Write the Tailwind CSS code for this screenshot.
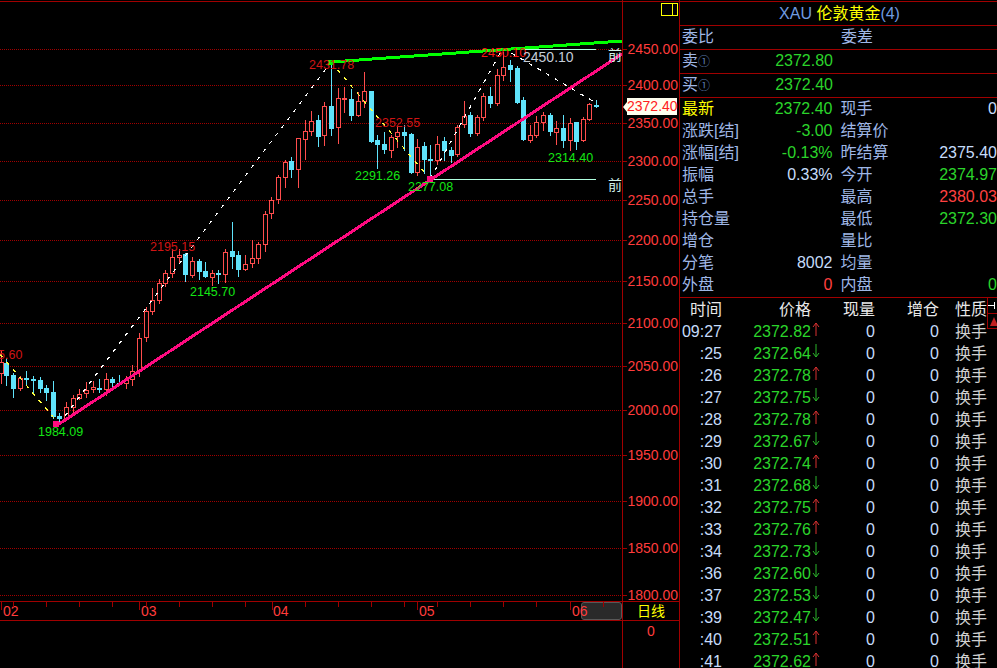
<!DOCTYPE html>
<html lang="en">
<head>
  <meta charset="UTF-8">
  <title>XAU 伦敦黄金</title>
  <script src="https://cdn.jsdelivr.net/npm/@tailwindcss/browser@4"></script>
</head>
<body class="bg-black overflow-hidden font-['Liberation_Sans','Noto_Sans_CJK_SC',sans-serif]">

  <div class="flex w-[997px] h-[668px] overflow-hidden bg-black">

    <!-- Chart + price axis -->
    <div class="flex flex-col w-[679px] shrink-0">
      <div class="flex h-[601px]">
        <svg id="chart" width="622" height="601" class="block shrink-0 text-[12.5px]"></svg>
        <div class="relative w-[57px] border-l border-[#a00000]">
          <svg id="axis" width="56" height="601" class="block text-[14px]"></svg>
          <!-- yellow box, top right -->
          <div class="absolute left-[38px] top-[3px] w-[17px] h-[13px] border border-[#ffff00] flex justify-end">
            <div class="w-[5px] h-full border-l border-[#ffff00]"></div>
          </div>
          <!-- last price tag -->
          <div class="absolute left-[4px] top-[98px] w-[50px] h-[17px] bg-[#fffff0] text-[#ff2020] text-[14px] leading-[17px] text-right pr-px">2372.40</div>
          <div class="absolute left-0 top-[102px] w-0 h-0 border-y-[5px] border-y-transparent border-r-[4px] border-r-[#fffff0]"></div>
        </div>
      </div>

      <!-- Date axis -->
      <div class="flex h-[18px] border-y border-[#a00000] box-content">
        <div id="dates" class="relative w-[622px] h-[18px] text-[#ff3c3c] text-[14px] leading-[18px] overflow-hidden">
          <!-- scroll handle -->
          <div class="absolute left-[581px] top-0 w-[41px] h-[18px] rounded-[3px] bg-[#2a2a2a] border border-[#585858]"></div>
          <span class="absolute left-[3px] top-0">02</span>
          <span class="absolute left-[141px] top-0">03</span>
          <span class="absolute left-[273px] top-0">04</span>
          <span class="absolute left-[419px] top-0">05</span>
          <span class="absolute left-[572px] top-0">06</span>
        </div>
        <div class="w-[57px] border-l border-[#a00000] text-center text-[#ffff00] text-[14px] leading-[18px]">日线</div>
      </div>

      <div class="flex flex-1">
        <div class="w-[622px]"></div>
        <div class="w-[57px] border-l border-[#a00000] text-center text-[#ff3c3c] text-[14px] leading-[20px]">0</div>
      </div>
    </div>

    <!-- Quote panel -->
    <div class="w-[318px] shrink-0 border-l border-[#a00000] overflow-hidden text-[16px] text-[#9fb7e6]">
      <div class="mt-px border-t border-b border-[#a00000] box-content h-[23px] flex items-center justify-center pl-[2px] leading-none">
        <span class="text-[#6f9be0]">XAU&nbsp;</span><span class="text-[#ffff00]">伦敦黄金</span><span class="text-[#6f9be0]">(4)</span>
      </div>

      <div class="flex h-[24px] items-center border-b border-[#a00000] pl-[2px] pb-[2px]">
        <span class="w-[159px]">委比</span><span>委差</span>
      </div>
      <div class="flex h-[24px] items-center border-b border-[#a00000] pl-[2px] pb-[2px]">
        <div class="w-[151px] flex justify-between"><span>卖<span class="text-[12px] text-[#5a78aa]">①</span></span><span class="text-[#2bd42b]">2372.80</span></div>
      </div>
      <div class="flex h-[24px] items-center border-b border-[#a00000] pl-[2px] pb-[2px]">
        <div class="w-[151px] flex justify-between"><span>买<span class="text-[12px] text-[#5a78aa]">①</span></span><span class="text-[#2bd42b]">2372.40</span></div>
      </div>

      <div id="stats" class="border-b border-[#a00000] h-[200px] box-border"></div>

      <!-- Tick table -->
      <div class="relative pt-px">
        <div class="flex h-[22px] items-center text-[#e8e8e8]">
          <span class="w-[42px] text-right">时间</span>
          <span class="w-[89px] text-right">价格</span>
          <span class="w-[64px] text-right">现量</span>
          <span class="w-[64px] text-right">增仓</span>
          <span class="w-[48px] text-right">性质</span>
        </div>
        <div id="ticks"></div>
        <!-- side marker -->
        <div class="absolute left-[307px] top-0 w-[11px] h-[31px] bg-black border-l border-b border-[#a00000]">
          <div class="h-[16px] border-b border-[#a00000] flex items-center">
            <div class="w-[6px] h-px bg-white"></div><div class="w-px h-[7px] bg-white"></div>
          </div>
          <div class="mt-[3px] ml-[2px] w-0 h-0 border-x-[4px] border-x-transparent border-b-[9px] border-b-[#c02020]"></div>
        </div>
      </div>
    </div>
  </div>

  <script>
    const NS = 'http://www.w3.org/2000/svg';
    const chart = document.getElementById('chart');
    const axis = document.getElementById('axis');

    const RED = '#ff4d4d';
    const CYAN = '#5fe3fb';
    const GRID = '#a00000';

    const add = (parent, tag, attrs, text) => {
      const el = document.createElementNS(NS, tag);
      Object.keys(attrs).forEach(k => el.setAttribute(k, attrs[k]));
      if (text) el.textContent = text;
      parent.appendChild(el);
      return el;
    };

    // top rule
    add(chart, 'rect', { x: 0, y: 1, width: 622, height: 1, fill: GRID });
    add(axis, 'rect', { x: 0, y: 1, width: 56, height: 1, fill: GRID });

    // price, y of the grid line
    const levels = [
      [2450, 49], [2400, 85], [2350, 123], [2300, 161], [2250, 200], [2200, 240], [2150, 281],
      [2100, 323], [2050, 366], [2000, 410], [1950, 455], [1900, 501], [1850, 548], [1800, 595]
    ];

    levels.forEach(([price, y]) => {
      add(chart, 'line', { x1: 0, x2: 622, y1: y + 0.5, y2: y + 0.5, stroke: GRID, 'stroke-dasharray': '1 1', 'shape-rendering': 'crispEdges' });
      add(axis, 'rect', { x: 0, y: y, width: 4, height: 1, fill: GRID });
      add(axis, 'text', { x: 55, y: y + 5, 'text-anchor': 'end', fill: '#ff3c3c' }, price.toFixed(2));
    });

    // x, body top, body bottom, wick top, wick bottom, colour
    const candles = [
      [1,362,373,350,383,'r'],[6,363,375,358,385,'c'],[13,375,388,373,397,'c'],[20,378,388,376,390,'r'],
      [26,378,379,371,384,'c'],[33,379,380,376,392,'c'],[40,380,388,377,392,'c'],[46,388,392,385,400,'c'],
      [53,392,416,381,418,'c'],[59,416,418,413,422,'c'],[66,407,418,402,420,'r'],[73,398,407,395,414,'r'],
      [79,394,398,389,399,'r'],[86,390,393,382,397,'r'],[93,387,389,381,392,'r'],[99,388,389,379,392,'c'],
      [106,379,389,373,395,'r'],[112,379,382,377,388,'c'],[119,383,384,375,385,'c'],[126,379,383,376,388,'r'],
      [132,371,379,365,385,'r'],[139,338,371,333,376,'r'],[146,311,337,307,341,'r'],[152,300,311,288,314,'r'],
      [159,283,300,279,303,'r'],[165,273,283,270,286,'r'],[172,257,273,249,277,'r'],[179,255,257,249,263,'r'],
      [185,254,274,253,281,'c'],[192,261,275,257,277,'r'],[199,261,271,259,279,'c'],[205,271,276,262,277,'c'],
      [212,273,277,270,285,'r'],[218,273,274,270,283,'c'],[225,252,274,249,282,'r'],[232,251,256,222,268,'c'],
      [238,255,269,251,276,'c'],[245,264,269,255,270,'r'],[252,258,263,240,267,'r'],[258,244,258,242,263,'r'],
      [265,214,244,211,251,'r'],[271,200,213,197,218,'r'],[278,177,199,175,203,'r'],[285,162,177,160,187,'r'],
      [291,161,169,157,177,'c'],[298,138,169,138,187,'r'],[305,131,139,120,159,'r'],[311,121,131,111,135,'r'],
      [318,120,136,115,146,'c'],[324,106,135,102,145,'r'],[331,106,128,60,135,'c'],[338,98,127,88,143,'r'],
      [344,98,99,87,112,'r'],[351,99,115,89,120,'c'],[358,101,115,92,116,'r'],[364,91,101,72,107,'r'],
      [371,91,141,91,142,'c'],[377,140,144,135,168,'c'],[384,144,149,132,153,'c'],[391,137,150,135,157,'r'],
      [397,132,136,126,147,'r'],[404,132,135,125,150,'c'],[411,134,172,133,173,'c'],[417,147,172,139,175,'r'],
      [424,146,159,142,173,'c'],[430,159,160,145,176,'c'],[437,144,160,136,164,'r'],[444,141,150,137,160,'c'],
      [451,150,155,147,162,'c'],[457,127,154,125,156,'r'],[464,116,124,101,127,'r'],[470,115,133,112,136,'c'],
      [477,117,133,115,135,'r'],[483,96,117,93,120,'r'],[490,96,103,87,107,'c'],[497,75,103,69,105,'r'],
      [503,67,75,52,80,'r'],[510,65,69,60,81,'c'],[517,68,102,66,103,'c'],[523,100,139,97,140,'c'],
      [530,135,140,125,142,'r'],[536,122,135,116,137,'r'],[543,115,122,112,130,'r'],[550,115,131,113,135,'c'],
      [556,128,132,121,144,'r'],[563,128,140,115,147,'c'],[570,123,140,118,150,'r'],[576,122,141,122,149,'c'],
      [583,119,140,117,141,'r'],[589,104,119,103,120,'r'],[596,105,106,100,107,'c']
    ];

    candles.forEach(([x, top, bottom, hi, lo, kind]) => {
      const color = kind === 'r' ? RED : CYAN;
      add(chart, 'rect', { x: x, y: hi, width: 1, height: lo - hi + 1, fill: color });
      add(chart, 'rect', { x: x - 2, y: top, width: 5, height: bottom - top + 1, fill: color });
      if (kind === 'r' && bottom - top > 1) {
        add(chart, 'rect', { x: x - 1, y: top + 1, width: 3, height: bottom - top - 1, fill: '#000' });
      }
    });

    const drawLine = (x1, y1, x2, y2, stroke, width, dash) => {
      const attrs = { x1, y1, x2, y2, stroke, 'stroke-width': width, 'shape-rendering': 'crispEdges' };
      if (dash) attrs['stroke-dasharray'] = dash;
      add(chart, 'line', attrs);
    };

    // Zigzag
    drawLine(0, 354, 59, 424, '#ffff40', 1.2, '4 6');
    drawLine(59, 424, 331, 62, '#ffffff', 1.2, '4 6');
    drawLine(331, 62, 430, 179, '#ffff40', 1.2, '4 6');
    drawLine(430, 179, 503, 48, '#ffffff', 1.2, '4 6');
    drawLine(503, 48, 596, 103, '#ffffff', 1.2, '4 6');

    // Level lines
    drawLine(505, 49.5, 596, 49.5, '#b0ffe0', 1);
    drawLine(430, 179.5, 596, 179.5, '#b0ffe0', 1);

    // Trend lines
    drawLine(59, 424, 622, 54, '#ff0a80', 3);
    drawLine(331, 62, 622, 41, '#00ff00', 3);
    add(chart, 'rect', { x: 53, y: 421, width: 6, height: 6, fill: '#ff0a80' });
    add(chart, 'rect', { x: 427, y: 176, width: 6, height: 6, fill: '#ff0a80' });
    add(chart, 'rect', { x: 328, y: 60, width: 6, height: 5, fill: '#00ff00' });

    // Swing labels
    const DARK = '#d01414';
    const GREEN = '#14e614';
    [
      ['5.60', -2, 359, DARK], ['1984.09', 38, 436, GREEN], ['2195.15', 150, 251, DARK], ['2145.70', 190, 296, GREEN],
      ['2431.78', 309, 69, DARK], ['2352.55', 375, 127, DARK], ['2291.26', 355, 180, GREEN], ['2277.08', 408, 191, GREEN],
      ['2450.10', 481, 57, '#ff1414'], ['2314.40', 548, 162, GREEN]
    ].forEach(([text, x, y, fill]) => add(chart, 'text', { x, y, fill }, text));
    add(chart, 'text', { x: 523, y: 62, fill: '#c4ccd8', 'font-size': 14 }, '2450.10');
    add(chart, 'text', { x: 608, y: 60, fill: '#d0f0e8', 'font-size': 14 }, '前');
    add(chart, 'text', { x: 608, y: 190, fill: '#d0f0e8', 'font-size': 14 }, '前');

    // Date axis ticks: long at month starts, short every 33px
    const dates = document.getElementById('dates');
    [1, 139, 272, 417, 570].forEach(x => {
      dates.insertAdjacentHTML('afterbegin', `<i class="absolute top-0 w-px h-[8px] bg-[#a00000]" style="left:${x}px"></i>`);
    });
    [13, 46, 79, 112, 146, 179, 212, 245, 305, 338, 371, 404, 437, 470, 503, 536, 603].forEach(x => {
      dates.insertAdjacentHTML('beforeend', `<i class="absolute top-0 w-px h-[5px] bg-[#a00000]" style="left:${x}px"></i>`);
    });

    // Stats block
    const WHITE = 'text-[#c6dcfa]';
    const UP = 'text-[#ff4040]';
    const DOWN = 'text-[#2bd42b]';
    const stats = [
      ['最新', '2372.40', DOWN, '现手', '0', WHITE],
      ['涨跌[结]', '-3.00', DOWN, '结算价', '', WHITE],
      ['涨幅[结]', '-0.13%', DOWN, '昨结算', '2375.40', WHITE],
      ['振幅', '0.33%', WHITE, '今开', '2374.97', DOWN],
      ['总手', '', WHITE, '最高', '2380.03', UP],
      ['持仓量', '', WHITE, '最低', '2372.30', DOWN],
      ['增仓', '', WHITE, '量比', '', WHITE],
      ['分笔', '8002', WHITE, '均量', '', WHITE],
      ['外盘', '0', UP, '内盘', '0', DOWN]
    ];

    document.getElementById('stats').innerHTML = stats.map(([a, av, ac, b, bv, bc], i) => `
      <div class="flex h-[22px] items-center pl-[2px]">
        <div class="w-[151px] flex justify-between"><span class="${i === 0 ? 'text-[#ffff00]' : ''}">${a}</span><span class="${ac}">${av}</span></div>
        <div class="ml-[8px] w-[157px] flex justify-between"><span>${b}</span><span class="${bc}">${bv}</span></div>
      </div>`).join('');

    // Tick rows
    const ticks = [
      ['09:27','82',1],[':25','64',0],[':26','78',1],[':27','75',0],[':28','78',1],[':29','67',0],
      [':30','74',1],[':31','68',0],[':32','75',1],[':33','76',1],[':34','73',0],[':36','60',0],
      [':37','53',0],[':39','47',0],[':40','51',1],[':41','62',1]
    ];
    const upArrow = '<svg width="8" height="16" class="shrink-0"><path d="M4 15V2M1 6l3-4 3 4" fill="none" stroke="#d93030"/></svg>';
    const downArrow = '<svg width="8" height="16" class="shrink-0"><path d="M4 1v13M1 10l3 4 3-4" fill="none" stroke="#2bb52b"/></svg>';

    document.getElementById('ticks').innerHTML = ticks.map(([time, cents, up]) => `
      <div class="flex h-[22px] items-center ${WHITE}">
        <span class="w-[42px] text-right">${time}</span>
        <span class="w-[89px] flex justify-end relative text-[#2bd42b]">2372.${cents}<span class="absolute left-[90px] top-[1px]">${up ? upArrow : downArrow}</span></span>
        <span class="w-[64px] text-right">0</span>
        <span class="w-[64px] text-right">0</span>
        <span class="w-[48px] text-right text-[#d0d0d0]">换手</span>
      </div>`).join('');
  </script>
</body>
</html>
